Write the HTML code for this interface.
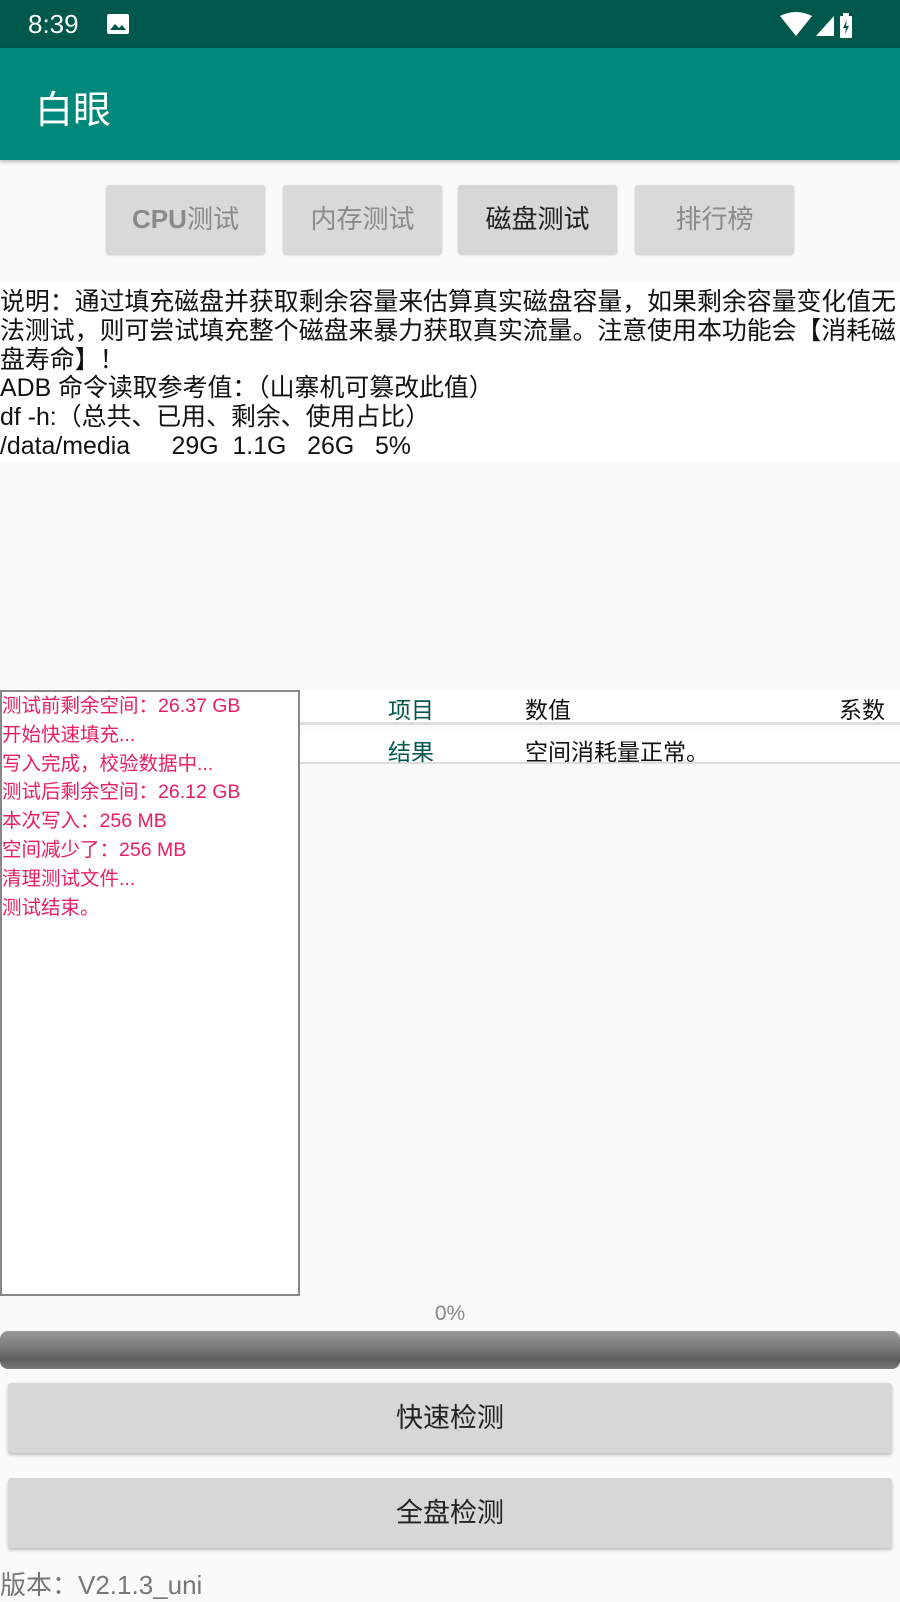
<!DOCTYPE html>
<html><head><meta charset="utf-8"><style>
*{margin:0;padding:0;box-sizing:border-box}
body{width:900px;height:1600px;background:#fafafa;font-family:"Liberation Sans","Noto Sans CJK SC",sans-serif;position:relative;overflow:hidden}
.abs{position:absolute}
.status{left:0;top:0;width:900px;height:48px;background:#00574b;color:#fff}
.bar{left:0;top:48px;width:900px;height:112px;background:#00897b;box-shadow:0 2px 4px rgba(0,0,0,.25)}
.tab{top:185px;height:69px;width:159px;background:#d9d9d9;border-radius:3px;box-shadow:0 1px 2px rgba(0,0,0,.2);font-size:26px;color:#8a8a8a;text-align:center;line-height:69px}
.desc{left:0;top:283px;width:900px;padding-top:5px;font-size:24.9px;line-height:28.8px;color:#111;background:#fff;white-space:nowrap;overflow:hidden}
.log{left:0;top:690px;width:300px;height:606px;border:2px solid #888;background:#fff;color:#e91e63;font-size:19.5px;line-height:28.8px}
.btn{left:8px;width:884px;height:70px;background:#d6d7d7;border-radius:3px;box-shadow:0 2px 3px rgba(0,0,0,.25);text-align:center;line-height:70px;font-size:27px;color:#222}
</style></head><body>
<div class="abs status">
<div class="abs" style="left:28px;top:9px;font-size:26px">8:39</div>
<svg class="abs" style="left:106px;top:13px" width="24" height="22"><rect x="1" y="1" width="22" height="20" rx="2" fill="#fff"/><path d="M4 17l5-6 4 4 3-3 4 5z" fill="#00574b"/></svg>
<svg class="abs" style="left:780px;top:12px" width="90" height="26"><path d="M0 4 Q16 -4 32 4 L16 24Z" fill="#fff"/><path d="M36 24 L54 4 L54 24Z" fill="#fff"/><rect x="60" y="4" width="12" height="22" rx="1" fill="#fff"/><rect x="63" y="1" width="6" height="3" fill="#fff"/><path d="M67 8 L63 16 L66 16 L65 22 L69 14 L66 14Z" fill="#00574b"/></svg>
</div>
<div class="abs bar"><div class="abs" style="left:35px;top:31px;font-size:38px;color:#fff">白眼</div></div>
<div class="abs tab" style="left:106px;font-weight:bold">CPU<span style="font-weight:normal">测试</span></div>
<div class="abs tab" style="left:283px">内存测试</div>
<div class="abs tab" style="left:458px;color:#222;background:#d6d7d7">磁盘测试</div>
<div class="abs tab" style="left:635px">排行榜</div>
<div class="abs desc">说明：通过填充磁盘并获取剩余容量来估算真实磁盘容量，如果剩余容量变化值无<br>法测试，则可尝试填充整个磁盘来暴力获取真实流量。注意使用本功能会【消耗磁<br>盘寿命】！<br>ADB 命令读取参考值：（山寨机可篡改此值）<br>df -h:（总共、已用、剩余、使用占比）<br>/data/media&nbsp;&nbsp;&nbsp;&nbsp;&nbsp;&nbsp;29G&nbsp;&nbsp;1.1G&nbsp;&nbsp;&nbsp;26G&nbsp;&nbsp;&nbsp;5%</div>
<div class="abs log">测试前剩余空间：26.37 GB<br>开始快速填充...<br>写入完成，校验数据中...<br>测试后剩余空间：26.12 GB<br>本次写入：256 MB<br>空间减少了：256 MB<br>清理测试文件...<br>测试结束。</div>
<div class="abs" style="left:300px;top:690px;width:600px;height:33px;background:#fff"></div>
<div class="abs" style="left:300px;top:722px;width:600px;height:3px;background:#ddd"></div>
<div class="abs" style="left:300px;top:729px;width:600px;height:34px;background:#fff"></div>
<div class="abs" style="left:300px;top:762px;width:600px;height:2px;background:#ddd"></div>
<div class="abs" style="left:388px;top:691px;font-size:23px;color:#00574b">项目</div>
<div class="abs" style="left:525px;top:691px;font-size:23px;color:#111">数值</div>
<div class="abs" style="left:839px;top:691px;font-size:23px;color:#111">系数</div>
<div class="abs" style="left:388px;top:733px;font-size:23px;color:#00574b">结果</div>
<div class="abs" style="left:525px;top:733px;font-size:23px;color:#111">空间消耗量正常。</div>
<div class="abs" style="left:0;top:1302px;width:900px;text-align:center;font-size:21px;color:#888">0%</div>
<div class="abs" style="left:0;top:1331px;width:900px;height:38px;border-radius:8px;background:linear-gradient(#9a9a9a,#6f706e 55%,#5e5f5d 75%,#797a78)"></div>
<div class="abs btn" style="top:1383px">快速检测</div>
<div class="abs btn" style="top:1478px">全盘检测</div>
<div class="abs" style="left:0;top:1565px;font-size:26px;color:#777">版本：V2.1.3_uni</div>
</body></html>
